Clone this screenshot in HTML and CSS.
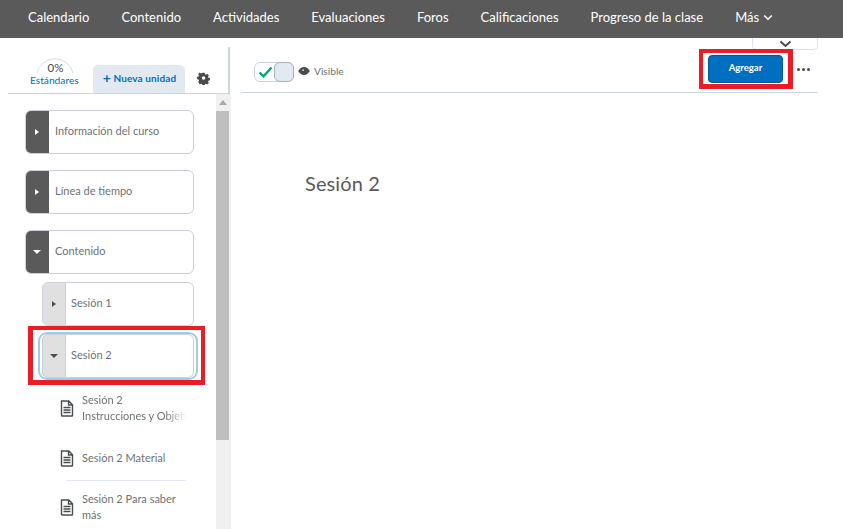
FILE: index.html
```html
<!DOCTYPE html>
<html lang="es">
<head>
<meta charset="utf-8">
<title>Sesión 2</title>
<link rel="stylesheet" href="styles.css">
</head>
<body>
<nav class="topnav">
  <a>Calendario</a><a>Contenido</a><a>Actividades</a><a>Evaluaciones</a><a>Foros</a><a>Calificaciones</a><a>Progreso de la clase</a>
  <a class="more">Más <svg width="10" height="7" viewBox="0 0 10 7"><path d="M1.200 1.500 5 5.200 8.800 1.500" fill="none" stroke="#fff" stroke-width="1.600"/></svg></a>
</nav>
<div class="layout">
  <aside class="sidebar">
    <div class="side-head">
      <div class="standards">
        <svg class="arc" width="40" height="20" viewBox="0 0 40 20"><path d="M2 19A18.500 18.500 0 0 1 38 19" fill="none" stroke="#dcdcdc" stroke-width="1"/></svg>
        <span class="pct">0%</span>
        <span class="std-label">Estándares</span>
      </div>
      <button class="new-unit"><span class="plus">+</span> Nueva unidad</button>
      <svg class="gear" width="13" height="13" viewBox="0 0 14 14"><path fill="#494c4e" fill-rule="evenodd" d="M5.700.5h2.600l.4 1.800 1.100.5 1.600-1 1.800 1.800-1 1.600.5 1.100 1.800.4v2.600l-1.800.4-.5 1.100 1 1.600-1.800 1.800-1.600-1-1.100.5-.4 1.800H5.700l-.4-1.800-1.100-.5-1.600 1L.8 11l1-1.600-.5-1.100L-.500 7.900V5.300l1.800-.4.500-1.100-1-1.600L2.600.4l1.600 1 1.100-.5zM7 4.500a2.100 2.100 0 1 0 0 4.200 2.100 2.100 0 0 0 0-4.200z" transform="translate(.5 .3) scale(.93)"/></svg>
    </div>
    <div class="side-scroll">
      <div class="tree">
        <div class="unit gap-lg">
          <span class="tab dark"><i class="tri right light"></i></span><span class="unit-label">Información del curso</span>
        </div>
        <div class="unit gap-lg">
          <span class="tab dark"><i class="tri right light"></i></span><span class="unit-label">Línea de tiempo</span>
        </div>
        <div class="unit gap-sm">
          <span class="tab dark"><i class="tri down light"></i></span><span class="unit-label">Contenido</span>
        </div>
        <div class="unit sub">
          <span class="tab pale"><i class="tri right"></i></span><span class="unit-label">Sesión 1</span>
        </div>
        <div class="highlight">
          <div class="unit sub selected">
            <span class="tab pale"><i class="tri down"></i></span><span class="unit-label">Sesión 2</span>
          </div>
        </div>
        <div class="topic t1">
          <svg class="doc" width="14" height="17" viewBox="0 0 14 17"><path d="M1.500 1h7.300l3.700 3.700v10.800a.5.500 0 0 1-.5.500h-10a.5.500 0 0 1-.5-.5zM8.500 1v4h4M3.500 7.500h7M3.500 10h7M3.500 12.500h7" fill="none" stroke="#494c4e" stroke-width="1.400"/></svg>
          <div class="topic-text fade">Sesión 2<br>Instrucciones y Objeti</div>
        </div>
        <div class="topic t2">
          <svg class="doc" width="14" height="17" viewBox="0 0 14 17"><path d="M1.500 1h7.300l3.700 3.700v10.800a.5.500 0 0 1-.5.500h-10a.5.500 0 0 1-.5-.5zM8.500 1v4h4M3.500 7.500h7M3.500 10h7M3.500 12.500h7" fill="none" stroke="#494c4e" stroke-width="1.400"/></svg>
          <div class="topic-text">Sesión 2 Material</div>
        </div>
        <div class="topic t3">
          <svg class="doc" width="14" height="17" viewBox="0 0 14 17"><path d="M1.500 1h7.300l3.700 3.700v10.800a.5.500 0 0 1-.5.500h-10a.5.500 0 0 1-.5-.5zM8.500 1v4h4M3.500 7.500h7M3.500 10h7M3.500 12.500h7" fill="none" stroke="#494c4e" stroke-width="1.400"/></svg>
          <div class="topic-text">Sesión 2 Para saber<br>más</div>
        </div>
      </div>
      <div class="scrollbar">
        <svg class="arrow-up" width="8" height="5" viewBox="0 0 8 5"><path d="M4 0 8 5H0z" fill="#a8a8a8"/></svg>
        <div class="thumb"></div>
      </div>
    </div>
  </aside>
  <main class="main">
    <div class="dropdown-tab"><svg width="13" height="8" viewBox="0 0 13 8"><path d="M1.500 1.500 6.500 6l5-4.500" fill="none" stroke="#494c4e" stroke-width="2"/></svg></div>
    <div class="toolbar">
      <div class="toggle">
        <span class="toggle-on"><svg width="15" height="12" viewBox="0 0 15 12"><path d="M1.500 6.500 5.500 10.300 13.500 1.500" fill="none" stroke="#03a678" stroke-width="2.400"/></svg></span>
        <span class="toggle-knob"></span>
      </div>
      <svg class="eye" width="12" height="8" viewBox="0 0 13 9"><path fill="#494c4e" d="M6.500 0C3.500 0 1.200 2 0 4.500 1.200 7 3.500 9 6.500 9s5.300-2 6.500-4.500C11.800 2 9.500 0 6.500 0z"/><circle cx="5.500" cy="3.500" r="1.100" fill="#d8d8d8"/></svg>
      <span class="visible">Visible</span>
      <div class="actions">
        <div class="red-box"><button class="primary">Agregar</button></div>
        <span class="dots"><i></i><i></i><i></i></span>
      </div>
    </div>
    <h1 class="title">Sesión 2</h1>
  </main>
</div>
</body>
</html>
```
FILE: styles.css
```css
* { box-sizing: border-box; }
html, body { margin: 0; padding: 0; }
body {
  width: 843px;
  height: 529px;
  overflow: hidden;
  background: #fff;
  font-family: Lato, "Open Sans", sans-serif;
  color: #6e7376;
}
.topnav {
  height: 38px;
  background: #5a5a5a;
  display: flex;
  align-items: center;
  gap: 32px;
  padding: 0 0 4px 28px;
  color: #fff;
  font-size: 13.020px;
  font-weight: 400;
  white-space: nowrap;
}
.more svg { margin-left: 1px; vertical-align: 1px; }
.layout {
  display: grid;
  grid-template-columns: 231px 1fr;
  height: 491px;
}
.sidebar { display: flex; flex-direction: column; height: 491px; }
.side-head {
  margin: 9px 0 0 8px;
  width: 222px;
  height: 47px;
  border-bottom: 1px solid #cdd5dc;
  border-right: 2px solid #cdd5dc;
  display: flex;
  align-items: flex-end;
  position: relative;
  flex: none;
}
.standards {
  width: 85px;
  height: 46px;
  position: relative;
  text-align: center;
}
.arc { position: absolute; left: 27px; top: 7px; }
.pct { position: absolute; left: 0; right: 0; top: 14px; font-size: 11.500px; color: #494c4e; padding-left: 10px; }
.std-label { position: absolute; left: 22px; top: 27px; font-size: 10.200px; color: #006fbf; }
.new-unit {
  width: 92px;
  height: 28px;
  border: 0;
  border-radius: 5px 5px 0 0;
  background: #e3e9f1;
  color: #006fbf;
  font: 700 10px Lato, sans-serif;
  letter-spacing: .1px;
  padding: 0 0 2px 1px;
  white-space: nowrap;
}
.plus { font-size: 14px; line-height: 10px; vertical-align: -1px; }
.gear { margin: 0 0 8px 12px; }
.side-scroll {
  flex: 1;
  display: flex;
  min-height: 0;
  padding-left: 25px;
  overflow: hidden;
}
.tree { width: 191px; padding-top: 16px; flex: none; }
.unit {
  width: 169px;
  height: 44px;
  display: flex;
  border: 1px solid #cdd0db;
  border-radius: 6px;
  background: #fff;
  overflow: hidden;
}
.gap-lg { margin-bottom: 16px; }
.gap-sm { margin-bottom: 8px; }
.sub { width: 152px; margin-left: 17px; }
.sub .unit-label { padding-left: 5px; }
.tab {
  width: 24px;
  flex: none;
  margin: -1px 0 -1px -1px;
  display: flex;
  align-items: center;
  justify-content: center;
}
.tab.dark { background: #5a5a5a; }
.tab.pale { background: #e0e0e0; border: 1px solid #cdd0db; width: 24px; border-radius: 6px 0 0 6px; }
.tri { display: block; width: 0; height: 0; border-style: solid; border-color: transparent; }
.tri.right { border-width: 3.500px 0 3.500px 4px; border-left-color: #494c4e; }
.tri.down { border-width: 4px 4px 0; border-top-color: #494c4e; }
.tri.right.light { border-left-color: #fff; }
.tri.down.light { border-top-color: #fff; }
.unit-label { font-size: 11px; padding: 0 0 3px 6px; align-self: center; white-space: nowrap; }
.highlight {
  width: 177px;
  height: 59px;
  margin-left: 3px;
  padding: 4px 0 0 10px;
  border: 4px solid #ed1c24;
  border-width: 4px 4px 5px 5px;
}
.highlight .unit { margin-left: -1px; width: 152px; overflow: visible; position: relative; }
.highlight .unit::after {
  content: "";
  position: absolute;
  top: -3px;
  bottom: -3px;
  left: -5px;
  right: -5px;
  border: 2px solid #a3cbe9;
  border-radius: 9px;
}
.topic { display: flex; align-items: center; padding-left: 35px; position: relative; }
.doc { flex: none; margin-right: 8px; }
.topic-text { font-size: 11px; line-height: 16px; white-space: nowrap; color: #6e7376; }
.fade {
  -webkit-mask-image: linear-gradient(to right, #000 80%, transparent 100%);
  mask-image: linear-gradient(to right, #000 80%, transparent 100%);
}
.t1 { margin-top: 7px; height: 32px; }
.t2 { margin-top: 26px; height: 16px; }
.t3 { margin-top: 14px; padding-top: 11px; height: 43px; }
.t3::before {
  content: "";
  position: absolute;
  left: 41px;
  top: 0;
  width: 120px;
  height: 1px;
  background: #e4e7f3;
}
.scrollbar {
  width: 15px;
  background: #f0f0f0;
  height: 100%;
  flex: none;
  display: flex;
  flex-direction: column;
  align-items: flex-start;
}
.arrow-up { margin: 6px 0 6px 3px; flex: none; }
.thumb { width: 13px; height: 329px; background: #bfbfbf; flex: none; }
.main { position: relative; padding: 0 25px 0 10px; }
.dropdown-tab {
  position: absolute;
  left: 521px;
  top: 0;
  width: 66px;
  height: 12px;
  border: 1px solid #dde2ea;
  border-top: 0;
  border-radius: 0 0 5px 5px;
  background: #fff;
  display: flex;
  justify-content: center;
  padding-top: 2px;
}
.toolbar {
  height: 55px;
  width: 577px;
  border-bottom: 1px solid #cdd5dc;
  display: flex;
  align-items: center;
  padding: 12px 0 0 13px;
}
.toggle {
  width: 40px;
  height: 20px;
  border: 1px solid #cdd5dc;
  border-radius: 6px;
  display: flex;
  position: relative;
  margin-top: 1px;
}
.toggle-on { width: 20px; display: flex; align-items: center; justify-content: center; padding-left: 1px; }
.toggle-knob {
  position: absolute;
  right: -1px;
  top: -1px;
  width: 20px;
  height: 20px;
  background: #e3e9f1;
  border: 1px solid #a9b0b8;
  border-radius: 6px;
}
.eye { margin-left: 4px; margin-top: 0; }
.visible { font-size: 10.200px; margin-left: 4px; margin-top: -1px; }
.actions { margin-left: auto; display: flex; align-items: center; position: relative; top: -2px; }
.red-box {
  width: 94px;
  height: 40px;
  border: 4px solid #ed1c24;
  border-width: 4px 5px 5px 4px;
  padding: 2px 0 0 5px;
}
.primary {
  display: block;
  width: 75px;
  height: 28px;
  background: #006fbf;
  border: 1px solid #005a9c;
  border-radius: 4px;
  color: #fff;
  font: 700 9.500px Lato, sans-serif;
  padding: 0 0 3px;
}
.dots { display: flex; gap: 2px; margin: 0 8px 0 4px; }
.dots i { width: 3px; height: 3px; background: #494c4e; border-radius: 50%; display: block; }
.title {
  margin: 78px 0 0 64px;
  font-size: 20px;
  font-weight: 400;
  color: #565a5c;
  line-height: 24px;
  letter-spacing: .1px;
}
```
